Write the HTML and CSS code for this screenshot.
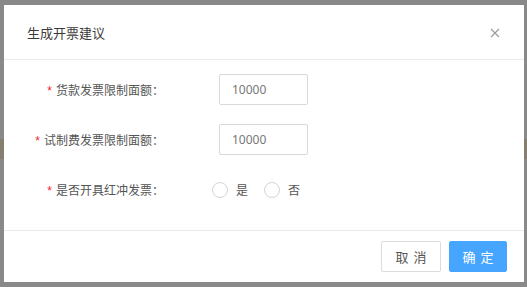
FILE: index.html
```html
<!DOCTYPE html>
<html>
<head>
    <meta charset="utf-8">
    <title>生成开票建议</title>
    <link rel="stylesheet" href="styles.css">
</head>
<body>
    <div class="dialog">
        <div class="dialog-header">
            <span class="dialog-title">生成开票建议</span>
            <span class="close">
                <svg width="10" height="10" viewBox="0 0 10 10"><path d="M1 1L9 9M9 1L1 9" stroke="#999" stroke-width="1.1" fill="none"/></svg>
            </span>
        </div>
        <div class="dialog-body">
            <div class="form-row">
                <label class="form-label"><span class="star">*</span>货款发票限制面额：</label>
                <input class="form-input" type="text" value="10000">
            </div>
            <div class="form-row">
                <label class="form-label"><span class="star">*</span>试制费发票限制面额：</label>
                <input class="form-input" type="text" value="10000">
            </div>
            <div class="form-row">
                <label class="form-label"><span class="star">*</span>是否开具红冲发票：</label>
                <div class="radios">
                    <span class="radio"><span class="radio-dot"></span>是</span>
                    <span class="radio"><span class="radio-dot"></span>否</span>
                </div>
            </div>
        </div>
        <div class="dialog-footer">
            <button class="btn">取消</button>
            <button class="btn btn-primary">确定</button>
        </div>
    </div>
</body>
</html>
```

FILE: styles.css
```css
html, body {
    margin: 0;
    padding: 0;
}
body {
    width: 527px;
    height: 287px;
    box-sizing: border-box;
    padding: 5px 0 0 4px;
    font-family: "Noto Sans", "Noto Sans CJK SC", sans-serif;
    background:
        linear-gradient(#888, #888) 0 25px / 100% 1px no-repeat,
        linear-gradient(#867f70, #867f70) 0 139px / 100% 20px no-repeat,
        #898989;
    overflow: hidden;
}
.dialog {
    width: 520px;
    height: 277px;
    background-color: #fff;
    display: flex;
    flex-direction: column;
}
.dialog-header {
    height: 54px;
    display: flex;
    align-items: center;
    justify-content: space-between;
    padding: 0 24px 0 23px;
    border-bottom: 1px solid #e9e9e9;
}
.dialog-title {
    font-size: 13px;
    color: #3a3a3a;
    font-family: "Noto Sans CJK SC", sans-serif;
}
.close {
    display: flex;
    width: 10px;
    height: 10px;
    margin-top: 2px;
}
.dialog-body {
    flex: 1;
    padding-top: 14px;
    display: flex;
    flex-direction: column;
    gap: 19px;
    border-bottom: 1px solid #e9e9e9;
}
.form-row {
    display: flex;
    align-items: center;
    height: 31px;
}
.form-label {
    width: 160px;
    text-align: right;
    font-size: 12px;
    color: #555;
    font-family: "Noto Sans CJK SC", sans-serif;
    margin-right: 55px;
    white-space: nowrap;
}
.star {
    color: #f5222d;
    margin-right: 4px;
    font-family: "Liberation Sans", sans-serif;
}
.form-input {
    width: 89px;
    height: 31px;
    box-sizing: border-box;
    border: 1px solid #d9d9d9;
    border-radius: 2px;
    padding: 0 12px;
    font-size: 12px;
    color: #777;
    font-family: "Noto Sans", sans-serif;
    outline: none;
}
.radios {
    display: flex;
    align-items: center;
    gap: 16px;
    margin-left: -7px;
}
.radio {
    display: flex;
    align-items: center;
    font-size: 12px;
    color: #555;
    font-family: "Noto Sans CJK SC", sans-serif;
}
.radio-dot {
    width: 16px;
    height: 16px;
    box-sizing: border-box;
    border: 1px solid #d4d4d4;
    border-radius: 50%;
    margin-right: 8px;
}
.dialog-footer {
    height: 51px;
    display: flex;
    justify-content: flex-end;
    align-items: flex-start;
    gap: 8px;
    padding: 10px 17px 0 0;
    box-sizing: border-box;
}
.btn {
    width: 60px;
    height: 31px;
    border: 1px solid #dcdcdc;
    border-radius: 2px;
    background-color: #fff;
    color: #555;
    font-size: 13px;
    letter-spacing: 5px;
    padding: 0 0 0 5px;
    font-family: "Noto Sans CJK SC", sans-serif;
}
.btn-primary {
    width: 58px;
    background-color: #46a6ff;
    border-color: #46a6ff;
    color: #fff;
}
```
